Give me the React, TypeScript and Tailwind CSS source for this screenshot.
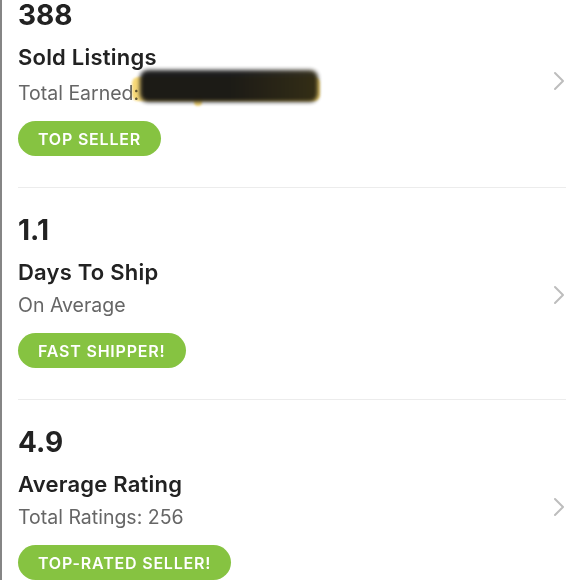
import React from "react";

const Chevron = () => (
  <svg width="14" height="20" viewBox="0 0 14 20" fill="none">
    <path d="M3 2 L11 10 L3 18" stroke="#bdbdbd" strokeWidth="2" strokeLinecap="round" strokeLinejoin="round" />
  </svg>
);

type Item = { num: string; title: string; sub: React.ReactNode; pill: string };

const Redacted = () => (
  <span className="relative inline-block w-[180px] h-[20px] align-baseline ml-[-1px]">
    <span className="absolute left-[-6px] top-[-3px] w-[188px] h-[24px] rounded-[6px] bg-[#f5cf55] opacity-80 mix-blend-multiply blur-[1px]" />
    <span className="absolute left-[56px] top-[16px] w-[8px] h-[10px] rounded-full bg-[#f5cf55] opacity-80 blur-[1px]" />
    <span className="absolute left-[2px] top-[-10px] w-[178px] h-[32px] rounded-[8px] bg-gradient-to-r from-[#111] via-[#111] to-[#2a2510] blur-[2px] opacity-95" />
  </span>
);

const items: Item[] = [
  { num: "388", title: "Sold Listings", sub: <>Total Earned:<Redacted /></>, pill: "TOP SELLER" },
  { num: "1.1", title: "Days To Ship", sub: "On Average", pill: "FAST SHIPPER!" },
  { num: "4.9", title: "Average Rating", sub: "Total Ratings: 256", pill: "TOP-RATED SELLER!" },
];

export default function App() {
  return (
    <div
      className="w-[580px] h-[580px] overflow-hidden bg-white border-l-2 border-[#858585]"
      style={{ fontFamily: "Inter, Lato, sans-serif" }}
    >
      <div className="-mt-[28px] pl-[16px] pr-[14px]">
        {items.map((it, i) => (
          <div key={i} className="border-t border-[#ececec] flex items-center">
            <div className="flex-1 flex flex-col items-start pt-[29px] pb-[31px]">
              <div className="text-[28px] leading-[27px] font-bold text-[#222]">{it.num}</div>
              <div className="mt-[17px] text-[22px] leading-[22px] font-semibold text-[#222] tracking-[0.01em]">{it.title}</div>
              <div className="mt-[12px] text-[19.5px] leading-[20px] text-[#666] whitespace-nowrap">{it.sub}</div>
              <div className="mt-[18px] h-[35px] px-[20px] flex items-center rounded-full bg-[#86c341] text-white text-[16px] font-semibold tracking-[0.05em]">
                {it.pill}
              </div>
            </div>
            <div className="pt-[2px]">
              <Chevron />
            </div>
          </div>
        ))}
      </div>
    </div>
  );
}
